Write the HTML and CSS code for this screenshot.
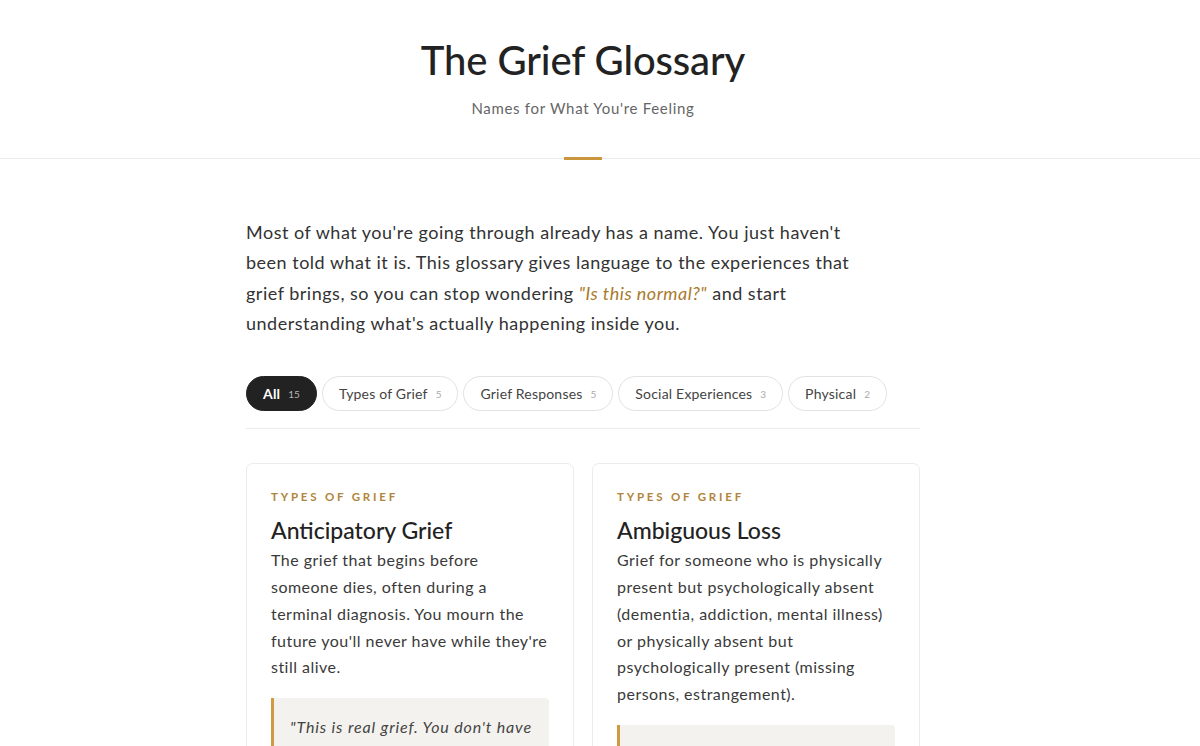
FILE: index.html
```html
<!DOCTYPE html>
<html lang="en">
<head>
<meta charset="utf-8">
<title>The Grief Glossary</title>
<link rel="stylesheet" href="styles.css">
</head>
<body>
<header class="site-header">
  <div class="header-inner">
    <h1 class="site-title">The Grief Glossary</h1>
    <p class="site-subtitle">Names for What You're Feeling</p>
    <span class="header-accent"></span>
  </div>
</header>
<div class="shell">
  <main class="content">
    <p class="intro">Most of what you're going through already has a name. You just haven't been told what it is. This glossary gives language to the experiences that grief brings, so you can stop wondering <em class="intro-em">"Is this normal?"</em> and start understanding what's actually happening inside you.</p>

    <nav class="filters">
      <button class="pill pill-active">All <span class="pill-count">15</span></button>
      <button class="pill">Types of Grief <span class="pill-count">5</span></button>
      <button class="pill">Grief Responses <span class="pill-count">5</span></button>
      <button class="pill">Social Experiences <span class="pill-count">3</span></button>
      <button class="pill">Physical <span class="pill-count">2</span></button>
    </nav>

    <section class="cards">
      <article class="card">
        <div class="card-cat">Types of Grief</div>
        <h2 class="card-title">Anticipatory Grief</h2>
        <p class="card-desc">The grief that begins before someone dies, often during a terminal diagnosis. You mourn the future you'll never have while they're still alive.</p>
        <blockquote class="card-quote">"This is real grief. You don't have to wait for a loss to be complete before you're allowed to mourn it."</blockquote>
      </article>
      <article class="card">
        <div class="card-cat">Types of Grief</div>
        <h2 class="card-title">Ambiguous Loss</h2>
        <p class="card-desc">Grief for someone who is physically present but psychologically absent (dementia, addiction, mental illness) or physically absent but psychologically present (missing persons, estrangement).</p>
        <blockquote class="card-quote">"Without clear answers, grief has nowhere to land. That uncertainty is part of the loss."</blockquote>
      </article>
    </section>
  </main>
</div>
</body>
</html>
```

FILE: styles.css
```css
* { box-sizing: border-box; }

html, body {
  margin: 0;
  padding: 0;
  background: #ffffff;
}

body {
  font-family: "Lato", "Noto Sans", sans-serif;
  color: #333333;
}

.site-header {
  border-bottom: 1px solid #ebebeb;
}

.header-inner {
  width: 1166px;
  position: relative;
  text-align: center;
  padding: 35px 0 38px;
}

.site-title {
  margin: 0;
  font-family: "Lato", "Noto Sans", sans-serif;
  font-weight: 500;
  font-size: 40px;
  line-height: 50px;
  color: #222222;
  letter-spacing: -0.1px;
}

.site-subtitle {
  margin: 11px 0 0;
  font-size: 15px;
  line-height: 24px;
  color: #666666;
  letter-spacing: 0.7px;
}

.header-accent {
  position: absolute;
  left: 50%;
  bottom: -2px;
  width: 38px;
  height: 3px;
  margin-left: -19px;
  background: #c9953d;
}

.shell {
  width: 1166px;
}

.content {
  max-width: 674px;
  margin: 0 auto;
  padding-top: 58px;
}

.intro {
  margin: 0;
  max-width: 605px;
  font-size: 18px;
  line-height: 30.3px;
  letter-spacing: 0.5px;
  color: #333333;
}

.intro-em {
  color: #a97a2c;
  font-style: italic;
}

.filters {
  display: flex;
  gap: 5px;
  margin-top: 38px;
  padding-bottom: 17px;
  border-bottom: 1px solid #ececec;
}

.pill {
  display: inline-flex;
  align-items: center;
  gap: 8px;
  height: 35px;
  padding: 0 16px;
  border: 1px solid #e2e2e2;
  border-radius: 18px;
  background: #ffffff;
  font-family: "Lato", "Noto Sans", sans-serif;
  font-size: 14px;
  letter-spacing: 0.2px;
  color: #444444;
  cursor: pointer;
}

.pill-count {
  font-size: 10px;
  letter-spacing: 0;
  color: #aaaaaa;
}

.pill-active {
  background: #222222;
  border-color: #222222;
  color: #ffffff;
  font-weight: 700;
}

.pill-active .pill-count {
  color: #b5b5b5;
  font-weight: 400;
}

.cards {
  display: grid;
  grid-template-columns: 1fr 1fr;
  gap: 18px;
  margin-top: 34px;
}

.card {
  border: 1px solid #ececec;
  border-radius: 7px;
  padding: 24px;
  background: #ffffff;
}

.card-cat {
  font-size: 11.5px;
  line-height: 17px;
  font-weight: 700;
  letter-spacing: 2.8px;
  text-transform: uppercase;
  color: #b0853b;
}

.card-title {
  margin: 11px 0 3px;
  font-family: "Lato", "Noto Sans", sans-serif;
  font-weight: 500;
  font-size: 23px;
  line-height: 28px;
  color: #222222;
}

.card-desc {
  margin: 0;
  font-size: 16px;
  line-height: 26.8px;
  letter-spacing: 0.48px;
  color: #3a3a3a;
}

.card-quote {
  margin: 17px 0 0;
  padding: 15px 16px;
  background: #f4f2ee;
  border-left: 3px solid #cf9a42;
  border-radius: 0 4px 4px 0;
  font-style: italic;
  font-size: 16px;
  line-height: 27px;
  letter-spacing: 0.85px;
  color: #444444;
}
```
